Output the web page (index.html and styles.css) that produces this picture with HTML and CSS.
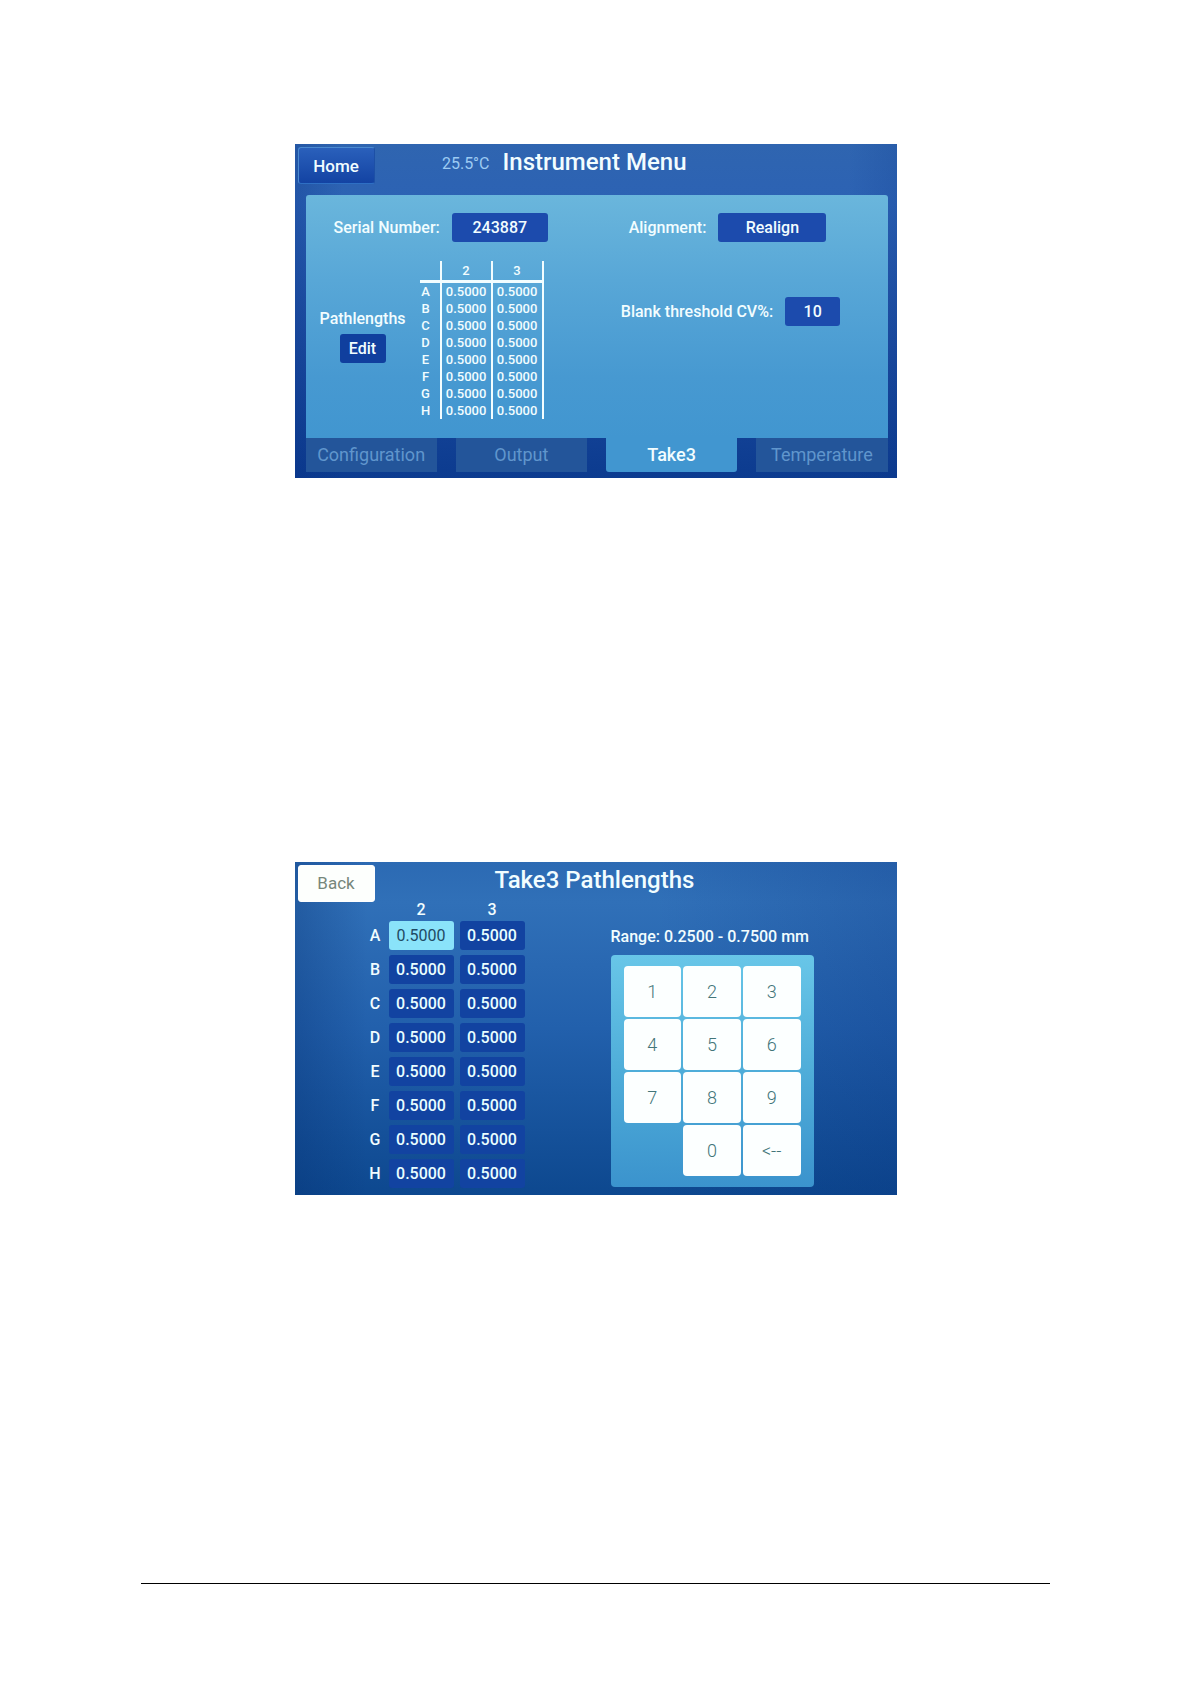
FILE: index.html
```html
<!DOCTYPE html>
<html lang="en">
<head>
    <meta charset="UTF-8">
    <meta name="viewport" content="width=device-width, initial-scale=1.0">
    <title>Instrument Menu</title>
    <link rel="stylesheet" href="styles.css">
</head>
<body>
    <main class="page">
        <section class="screen menu-screen">
            <header class="screen-header">
                <div class="header-left">
                    <button class="nav-btn" type="button">Home</button>
                    <span class="temp">25.5°C</span>
                </div>
                <h1>Instrument Menu</h1>
            </header>

            <div class="panel">
                <div class="panel-left">
                    <div class="field serial">
                        <label for="serial">Serial Number:</label>
                        <button class="value-btn" id="serial" type="button">243887</button>
                    </div>
                    <div class="pathlengths">
                        <div class="path-edit">
                            <label for="edit">Pathlengths</label>
                            <button class="value-btn edit-btn" id="edit" type="button">Edit</button>
                        </div>
                        <table class="path-table">
                            <thead>
                                <tr><th></th><th>2</th><th>3</th></tr>
                            </thead>
                            <tbody>
                                <tr><th>A</th><td>0.5000</td><td>0.5000</td></tr>
                                <tr><th>B</th><td>0.5000</td><td>0.5000</td></tr>
                                <tr><th>C</th><td>0.5000</td><td>0.5000</td></tr>
                                <tr><th>D</th><td>0.5000</td><td>0.5000</td></tr>
                                <tr><th>E</th><td>0.5000</td><td>0.5000</td></tr>
                                <tr><th>F</th><td>0.5000</td><td>0.5000</td></tr>
                                <tr><th>G</th><td>0.5000</td><td>0.5000</td></tr>
                                <tr><th>H</th><td>0.5000</td><td>0.5000</td></tr>
                            </tbody>
                        </table>
                    </div>
                </div>
                <div class="panel-right">
                    <div class="field">
                        <label for="realign">Alignment:</label>
                        <button class="value-btn realign-btn" id="realign" type="button">Realign</button>
                    </div>
                    <div class="field threshold">
                        <label for="threshold">Blank threshold CV%:</label>
                        <button class="value-btn threshold-btn" id="threshold" type="button">10</button>
                    </div>
                </div>
            </div>

            <nav class="tabs">
                <a href="#configuration">Configuration</a>
                <a href="#output">Output</a>
                <a href="#take3" class="active">Take3</a>
                <a href="#temperature">Temperature</a>
            </nav>
        </section>

        <section class="screen path-screen">
            <header class="screen-header">
                <div class="header-left">
                    <button class="nav-btn back-btn" type="button">Back</button>
                </div>
                <h2>Take3 Pathlengths</h2>
            </header>

            <div class="path-body">
                <table class="cells">
                    <thead>
                        <tr><th></th><th>2</th><th>3</th></tr>
                    </thead>
                    <tbody>
                        <tr><th>A</th><td><button class="cell selected" type="button">0.5000</button></td><td><button class="cell" type="button">0.5000</button></td></tr>
                        <tr><th>B</th><td><button class="cell" type="button">0.5000</button></td><td><button class="cell" type="button">0.5000</button></td></tr>
                        <tr><th>C</th><td><button class="cell" type="button">0.5000</button></td><td><button class="cell" type="button">0.5000</button></td></tr>
                        <tr><th>D</th><td><button class="cell" type="button">0.5000</button></td><td><button class="cell" type="button">0.5000</button></td></tr>
                        <tr><th>E</th><td><button class="cell" type="button">0.5000</button></td><td><button class="cell" type="button">0.5000</button></td></tr>
                        <tr><th>F</th><td><button class="cell" type="button">0.5000</button></td><td><button class="cell" type="button">0.5000</button></td></tr>
                        <tr><th>G</th><td><button class="cell" type="button">0.5000</button></td><td><button class="cell" type="button">0.5000</button></td></tr>
                        <tr><th>H</th><td><button class="cell" type="button">0.5000</button></td><td><button class="cell" type="button">0.5000</button></td></tr>
                    </tbody>
                </table>

                <div class="entry">
                    <p>Range: 0.2500 - 0.7500 mm</p>
                    <div class="keypad">
                        <button type="button">1</button>
                        <button type="button">2</button>
                        <button type="button">3</button>
                        <button type="button">4</button>
                        <button type="button">5</button>
                        <button type="button">6</button>
                        <button type="button">7</button>
                        <button type="button">8</button>
                        <button type="button">9</button>
                        <button type="button" class="zero">0</button>
                        <button type="button">&lt;--</button>
                    </div>
                </div>
            </div>
        </section>

        <hr class="page-rule">
    </main>
</body>
</html>
```

FILE: styles.css
```css
* {
    margin: 0;
    padding: 0;
    box-sizing: border-box;
}

body {
    font-family: Roboto, Arial, sans-serif;
    font-weight: 500;
    background: #fff;
}

button {
    font: inherit;
    border: none;
    cursor: pointer;
}

.page {
    display: flex;
    flex-direction: column;
    align-items: center;
    min-height: 100vh;
    padding: 144px 141px 99px;
}

.screen {
    width: 100%;
    max-width: 602px;
    color: #f2fdff;
    font-size: 16px;
}

.menu-screen {
    margin-bottom: 384px;
    padding: 0 9px 6px 11px;
    background: linear-gradient(90deg, rgba(5, 45, 130, 0.25), transparent 8%, transparent 92%, rgba(5, 45, 130, 0.15)),
        linear-gradient(#2f65b0, #2c62b4 18%, #1c4ca0 60%, #0c3b8f);
}

.path-screen {
    padding: 0 9px 2px 11px;
    background: linear-gradient(90deg, rgba(5, 45, 110, 0.3), transparent 12%, transparent 60%, rgba(5, 40, 120, 0.2)),
        linear-gradient(#2c6ab3, #3070b8 12%, #2260ac 50%, #0d488f);
}

/* header */
.screen-header {
    display: grid;
    grid-template-columns: 1fr auto 1fr;
    column-gap: 9px;
    height: 51px;
    margin-left: -8px;
    padding-top: 3px;
}

.screen-header h1,
.screen-header h2 {
    padding-left: 4px;
    font-size: 24px;
    font-weight: 500;
    line-height: 30px;
}

.header-left {
    display: flex;
    justify-content: space-between;
}

.nav-btn {
    width: 77px;
    height: 37px;
    border: 1px solid #4b8ad0;
    border-right-color: #1d50a6;
    border-bottom-color: #2e6fc4;
    border-radius: 3px;
    background: linear-gradient(#2a60bb, #1343a3);
    color: #f2fdff;
    font-size: 17px;
}

.back-btn {
    border-color: #fff;
    background: #fdfffd;
    color: #76877b;
    font-weight: 400;
}

.temp {
    color: #9dcbf3;
    font-weight: 400;
    line-height: 34px;
}

/* settings panel */
.panel {
    display: grid;
    grid-template-columns: 1fr 1fr;
    padding: 18px 24px 19px 14px;
    border-radius: 3px 3px 0 0;
    background: linear-gradient(#6ab6dc, #58a7d7 35%, #4799d1 75%, #4196d0);
}

.field {
    display: flex;
    align-items: center;
    gap: 12px;
}

.serial {
    padding-left: 14px;
}

.value-btn {
    width: 96px;
    height: 29px;
    border-radius: 3px;
    background: #1c4bad;
    color: #f2fdff;
}

.realign-btn {
    width: 108px;
}

.threshold-btn {
    width: 55px;
}

.edit-btn {
    width: 46px;
    background: #103f9e;
}

.pathlengths {
    display: flex;
    align-items: center;
    gap: 14px;
    margin-top: 19px;
}

.path-edit {
    display: flex;
    flex-direction: column;
    align-items: center;
    gap: 6px;
    margin-bottom: 8px;
}

.path-table {
    border-collapse: collapse;
    font-size: 13px;
    line-height: 17px;
    text-align: center;
}

.path-table th {
    width: 21px;
    font-weight: 500;
}

.path-table td {
    width: 51px;
}

.path-table thead th {
    height: 20px;
    border-bottom: 3px solid #f2fdff;
}

.path-table tbody th {
    padding-right: 8px;
}

.path-table td,
.path-table th + th {
    border-left: 2px solid #f2fdff;
    border-right: 2px solid #f2fdff;
}

.panel-right {
    display: flex;
    flex-direction: column;
    align-items: center;
    gap: 55px;
}

.threshold {
    padding-left: 6px;
}

/* tabs */
.tabs {
    display: grid;
    grid-template-columns: repeat(4, 1fr);
    gap: 19px;
}

.tabs a {
    background: #23559a;
    color: #6096cd;
    font-size: 18px;
    font-weight: 400;
    line-height: 34px;
    text-align: center;
    text-decoration: none;
}

.tabs a.active {
    border-radius: 0 0 3px 3px;
    background: #4196d0;
    color: #f2fdff;
    font-weight: 500;
}

/* pathlength editor */
.path-body {
    display: flex;
    justify-content: space-between;
    align-items: flex-end;
    padding: 0 74px 0 56px;
}

.cells {
    margin-top: -14px;
    border-spacing: 6px 4px;
}

.cells th {
    font-weight: 500;
    line-height: 14px;
}

.cells tbody th {
    width: 15px;
    height: 30px;
}

.cell {
    display: block;
    width: 65px;
    height: 29px;
    border-radius: 3px;
    background: #1243a1;
    color: #e9feff;
}

.cell.selected {
    background: #8ae3fa;
    color: #1f4a63;
    font-weight: 400;
}

.entry {
    margin-bottom: 6px;
}

.entry p {
    line-height: 36px;
    white-space: nowrap;
}

.keypad {
    display: grid;
    grid-template-columns: repeat(3, 1fr);
    gap: 2px;
    width: 203px;
    padding: 11px 13px;
    border-radius: 4px;
    background: linear-gradient(#68c6e8, #4fadd9 50%, #3b93cd);
}

.keypad button {
    height: 51px;
    border-radius: 4px;
    background: #fcffff;
    color: #427579;
    font-size: 18px;
    font-weight: 300;
}

.keypad .zero {
    grid-column: 2;
}

.page-rule {
    width: 100%;
    margin-top: auto;
    border: none;
    border-top: 1px solid #000;
}
```
